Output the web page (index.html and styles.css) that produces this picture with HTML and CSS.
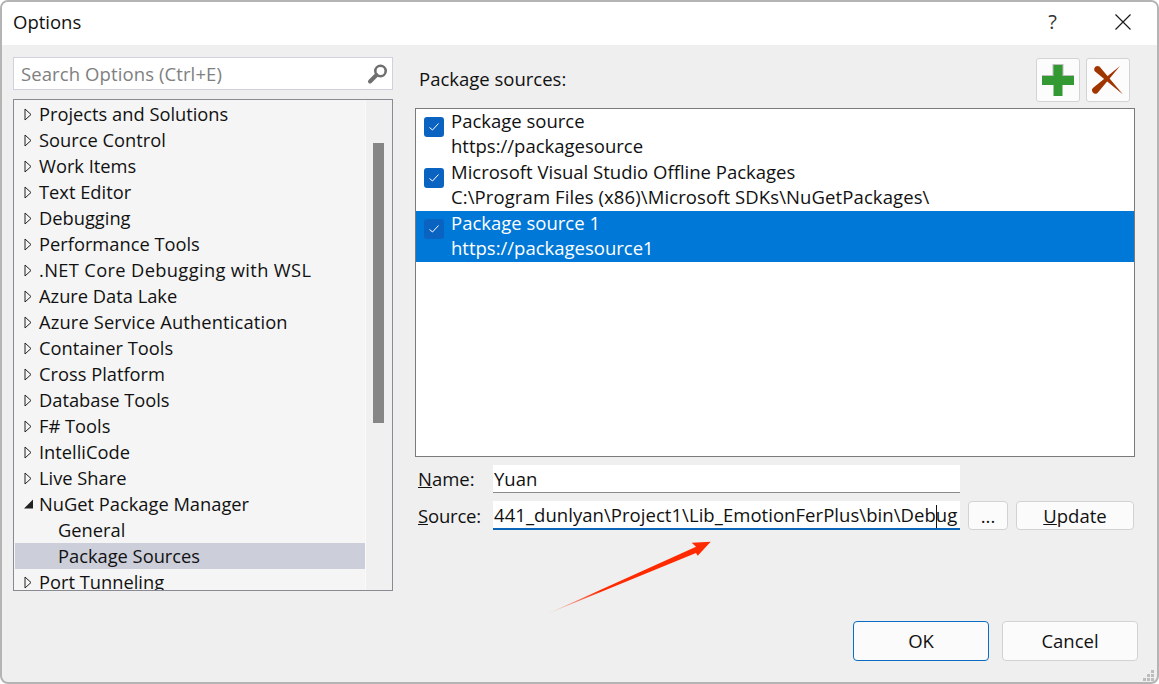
FILE: index.html
```html
<!DOCTYPE html>
<html lang="en">
<head>
    <meta charset="UTF-8">
    <title>Options</title>
    <link rel="stylesheet" href="styles.css">
</head>
<body>

<div class="dialog">
    <div class="titlebar">
        <span class="title">Options</span>
        <span class="help">?</span>
        <svg class="close" width="16" height="16" viewBox="0 0 16 16"><path d="M0.5 0.5L15.5 15.5M15.5 0.5L0.5 15.5" stroke="#1a1a1a" stroke-width="1.2" fill="none"/></svg>
    </div>

    <div class="content">
        <div class="left">
            <div class="search">
                <span class="search-text">Search Options (Ctrl+E)</span>
                <svg width="22" height="22" viewBox="0 0 22 22"><circle cx="13.5" cy="8" r="5.2" fill="none" stroke="#6f6f6f" stroke-width="2.6"/><path d="M9.5 12L3 18.5" stroke="#6f6f6f" stroke-width="4" stroke-linecap="round"/></svg>
            </div>
            <div class="tree">
                <div class="tree-rows">
                    <div class="row"><svg class="arrow" width="8" height="13" viewBox="0 0 8 13"><path d="M1 1L7 6.5L1 12Z" fill="none" stroke="#222"/></svg>Projects and Solutions</div>
                    <div class="row"><svg class="arrow" width="8" height="13" viewBox="0 0 8 13"><path d="M1 1L7 6.5L1 12Z" fill="none" stroke="#222"/></svg>Source Control</div>
                    <div class="row"><svg class="arrow" width="8" height="13" viewBox="0 0 8 13"><path d="M1 1L7 6.5L1 12Z" fill="none" stroke="#222"/></svg>Work Items</div>
                    <div class="row"><svg class="arrow" width="8" height="13" viewBox="0 0 8 13"><path d="M1 1L7 6.5L1 12Z" fill="none" stroke="#222"/></svg>Text Editor</div>
                    <div class="row"><svg class="arrow" width="8" height="13" viewBox="0 0 8 13"><path d="M1 1L7 6.5L1 12Z" fill="none" stroke="#222"/></svg>Debugging</div>
                    <div class="row"><svg class="arrow" width="8" height="13" viewBox="0 0 8 13"><path d="M1 1L7 6.5L1 12Z" fill="none" stroke="#222"/></svg>Performance Tools</div>
                    <div class="row wide"><svg class="arrow" width="8" height="13" viewBox="0 0 8 13"><path d="M1 1L7 6.5L1 12Z" fill="none" stroke="#222"/></svg>.NET Core Debugging with WSL</div>
                    <div class="row"><svg class="arrow" width="8" height="13" viewBox="0 0 8 13"><path d="M1 1L7 6.5L1 12Z" fill="none" stroke="#222"/></svg>Azure Data Lake</div>
                    <div class="row auth"><svg class="arrow" width="8" height="13" viewBox="0 0 8 13"><path d="M1 1L7 6.5L1 12Z" fill="none" stroke="#222"/></svg>Azure Service Authentication</div>
                    <div class="row"><svg class="arrow" width="8" height="13" viewBox="0 0 8 13"><path d="M1 1L7 6.5L1 12Z" fill="none" stroke="#222"/></svg>Container Tools</div>
                    <div class="row"><svg class="arrow" width="8" height="13" viewBox="0 0 8 13"><path d="M1 1L7 6.5L1 12Z" fill="none" stroke="#222"/></svg>Cross Platform</div>
                    <div class="row"><svg class="arrow" width="8" height="13" viewBox="0 0 8 13"><path d="M1 1L7 6.5L1 12Z" fill="none" stroke="#222"/></svg>Database Tools</div>
                    <div class="row"><svg class="arrow" width="8" height="13" viewBox="0 0 8 13"><path d="M1 1L7 6.5L1 12Z" fill="none" stroke="#222"/></svg>F# Tools</div>
                    <div class="row"><svg class="arrow" width="8" height="13" viewBox="0 0 8 13"><path d="M1 1L7 6.5L1 12Z" fill="none" stroke="#222"/></svg>IntelliCode</div>
                    <div class="row"><svg class="arrow" width="8" height="13" viewBox="0 0 8 13"><path d="M1 1L7 6.5L1 12Z" fill="none" stroke="#222"/></svg>Live Share</div>
                    <div class="row"><svg class="arrow" width="8" height="13" viewBox="0 0 8 13"><path d="M0 10.5L9 1.5V10.5Z" fill="#222"/></svg>NuGet Package Manager</div>
                    <div class="row child">General</div>
                    <div class="row child selected">Package Sources</div>
                    <div class="row"><svg class="arrow" width="8" height="13" viewBox="0 0 8 13"><path d="M1 1L7 6.5L1 12Z" fill="none" stroke="#222"/></svg>Port Tunneling</div>
                </div>
                <div class="scrollbar"><div class="thumb"></div></div>
            </div>
        </div>

        <div class="right">
            <div class="sources-head">
                <span class="sources-label">Package sources:</span>
                <div class="icon-btn">
                    <svg width="32" height="33" viewBox="0 0 32 33"><path d="M10.500 0H21.500V11H32V21H0V11H10.500Z" fill="#bdbdbd"/><path d="M11.500 1H20.500V12H32V21H20.500V32H11.500V21H0V12H11.500Z" fill="#339933"/></svg>
                </div>
                <div class="icon-btn">
                    <svg width="32" height="31" viewBox="0 0 32 31"><path d="M2.500 6L31 29.500L7.500 1.500A3.500 3.500 0 0 0 2.500 6Z" fill="#a03500"/><path d="M1.500 22.500L28 1L5.500 28A3.200 3.200 0 0 1 1.500 22.500Z" fill="#a03500"/></svg>
                </div>
            </div>
            <div class="source-list">
                <div class="source">
                    <span class="check"><svg width="12" height="10" viewBox="0 0 12 10"><path d="M1.500 5.500L4.500 8L10.500 1.500" stroke="#fff" fill="none"/></svg></span>
                    <div class="source-text">Package source<br>https://packagesource</div>
                </div>
                <div class="source">
                    <span class="check"><svg width="12" height="10" viewBox="0 0 12 10"><path d="M1.500 5.500L4.500 8L10.500 1.500" stroke="#fff" fill="none"/></svg></span>
                    <div class="source-text">Microsoft Visual Studio Offline Packages<br><span class="path">C:\Program Files (x86)\Microsoft SDKs\NuGetPackages\</span></div>
                </div>
                <div class="source active">
                    <span class="check"><svg width="12" height="10" viewBox="0 0 12 10"><path d="M1.500 5.500L4.500 8L10.500 1.500" stroke="#fff" fill="none"/></svg></span>
                    <div class="source-text">Package source 1<br>https://packagesource1</div>
                </div>
            </div>
            <div class="field name-field">
                <label><u>N</u>ame:</label>
                <div class="input">Yuan</div>
            </div>
            <div class="field source-field">
                <label><u>S</u>ource:</label>
                <div class="input focused">441_dunlyan\Project1\Lib_EmotionFerPlus\bin\Deb<span class="caret"></span>ug</div>
                <button class="btn browse" type="button">...</button>
                <button class="btn update" type="button"><u>U</u>pdate</button>
            </div>
        </div>
    </div>

    <div class="footer">
        <button class="btn primary" type="button">OK</button>
        <button class="btn" type="button">Cancel</button>
    </div>
    <svg class="grip" width="11" height="11" viewBox="0 0 11 11" fill="#bdbdbd"><rect x="8" width="3" height="3"/><rect x="4" y="4" width="3" height="3"/><rect x="8" y="4" width="3" height="3"/><rect y="8" width="3" height="3"/><rect x="4" y="8" width="3" height="3"/><rect x="8" y="8" width="3" height="3"/></svg>
</div>

<svg class="red-arrow" width="1159" height="684" viewBox="0 0 1159 684">
    <defs>
        <linearGradient id="fade" gradientUnits="userSpaceOnUse" x1="547" y1="614" x2="600" y2="590">
            <stop offset="0" stop-color="#ff3b1f" stop-opacity="0.1"/>
            <stop offset="1" stop-color="#ff2a00"/>
        </linearGradient>
    </defs>
    <path d="M547 614L696 546.700L691.700 542.700L710.700 541.700L697.700 555.700L696 553Z" fill="url(#fade)"/>
</svg>

</body>
</html>
```

FILE: styles.css
```css
* {
    box-sizing: border-box;
}

body {
    margin: 0;
    width: 1159px;
    height: 684px;
    overflow: hidden;
    background: #fff;
    font-family: "Open Sans", "Noto Sans", Arial, sans-serif;
    font-size: 18.5px;
    color: #111;
}

.dialog {
    position: relative;
    width: 1159px;
    height: 684px;
    display: flex;
    flex-direction: column;
    background: #efefef;
    border: 2px solid #b4b4b4;
    border-radius: 8px;
    overflow: hidden;
}

.titlebar {
    height: 43px;
    flex-shrink: 0;
    display: flex;
    align-items: center;
    background: #fff;
    padding: 0 26px 4px 11px;
}

.title {
    flex: 1;
}

.help {
    margin-right: 58px;
    font-size: 20px;
    color: #333;
}

.content {
    height: 548px;
    display: flex;
    padding: 12px 22px 0 11px;
    gap: 22px;
}

.left {
    width: 380px;
    flex-shrink: 0;
}

.search {
    height: 33px;
    display: flex;
    align-items: center;
    justify-content: space-between;
    padding: 0 3px 0 7px;
    background: #fff;
    border: 1px solid #d0d0e0;
    color: #808080;
    margin-bottom: 9px;
}

.search-text {
    letter-spacing: 0.1px;
}

.tree {
    height: 492px;
    display: flex;
    background: #f5f5f5;
    border: 1px solid #8a8a94;
    font-size: 18.3px;
    overflow: hidden;
}

.tree-rows {
    flex: 1;
    padding: 1px 0 0 1px;
}

.row {
    height: 26px;
    display: flex;
    align-items: center;
    padding-left: 24px;
    white-space: nowrap;
    line-height: 26px;
}

.row.wide {
    letter-spacing: 0.35px;
}

.row.auth {
    letter-spacing: 0.15px;
}

.arrow {
    margin-left: -15px;
    margin-right: 7px;
    flex-shrink: 0;
    overflow: visible;
}

.row.child {
    padding-left: 43px;
}

.row.selected {
    background: #ccceda;
}

.scrollbar {
    width: 27px;
    background: #f0f0f0;
    border-left: 1px solid #fafafa;
    padding: 43px 8px 0 7px;
}

.thumb {
    height: 280px;
    background: #868686;
}

.right {
    flex: 1;
}

.sources-head {
    height: 51px;
    display: flex;
    align-items: flex-start;
    gap: 6px;
    padding-right: 5px;
}

.sources-label {
    flex: 1;
    padding: 9px 0 0 4px;
}

.icon-btn {
    width: 44px;
    height: 44px;
    margin-top: 1px;
    display: flex;
    align-items: center;
    justify-content: center;
    background: #fcfcfc;
    border: 1px solid #d4d4d4;
    border-radius: 3px;
}

.source-list {
    height: 349px;
    background: #fff;
    border: 1px solid #7a7a7a;
}

.source {
    height: 51px;
    display: flex;
    align-items: flex-start;
    gap: 7px;
    padding-left: 8px;
    line-height: 25px;
    white-space: nowrap;
}

.source-text {
    margin-top: -1px;
}

.source.active {
    background: #0078d7;
    color: #fff;
}

.path {
    letter-spacing: 0.1px;
}

.check {
    width: 20px;
    height: 20px;
    margin-top: 8px;
    display: flex;
    align-items: center;
    justify-content: center;
    background: #0b63c1;
    border-radius: 3px;
    flex-shrink: 0;
}

.field {
    display: flex;
    align-items: center;
}

.field label {
    width: 78px;
    flex-shrink: 0;
    padding-left: 3px;
}

.name-field {
    margin-top: 8px;
    height: 28px;
}

.name-field label {
    padding-bottom: 2px;
}

.source-field {
    margin-top: 8px;
    height: 29px;
    gap: 8px;
}

.source-field label {
    margin-right: -8px;
    letter-spacing: -0.2px;
}

.input {
    width: 467px;
    height: 100%;
    background: #fff;
    border-bottom: 1px solid #8a8a8a;
    padding-left: 1px;
    line-height: 27px;
    white-space: nowrap;
    overflow: hidden;
}

.input.focused {
    letter-spacing: 0.05px;
    border-bottom: 2px solid #0a63b8;
}

.caret {
    display: inline-block;
    width: 1px;
    height: 24px;
    margin-right: -1px;
    background: #111;
    vertical-align: middle;
}

.btn {
    width: 136px;
    height: 40px;
    padding: 0 0 2px;
    background: #fbfbfb;
    border: 1px solid #d2d2d2;
    border-radius: 4px;
    font: inherit;
    color: inherit;
}

.browse {
    width: 40px;
    height: 29px;
    padding: 0;
}

.update {
    width: 118px;
    height: 29px;
    padding: 0;
}

.footer {
    display: flex;
    justify-content: flex-end;
    gap: 13px;
    padding: 28px 19px 0 0;
}

.btn.primary {
    border-color: #0a6cc4;
}

.grip {
    position: absolute;
    right: 3px;
    bottom: 1px;
}

.red-arrow {
    position: absolute;
    left: 0;
    top: 0;
    pointer-events: none;
}
```
